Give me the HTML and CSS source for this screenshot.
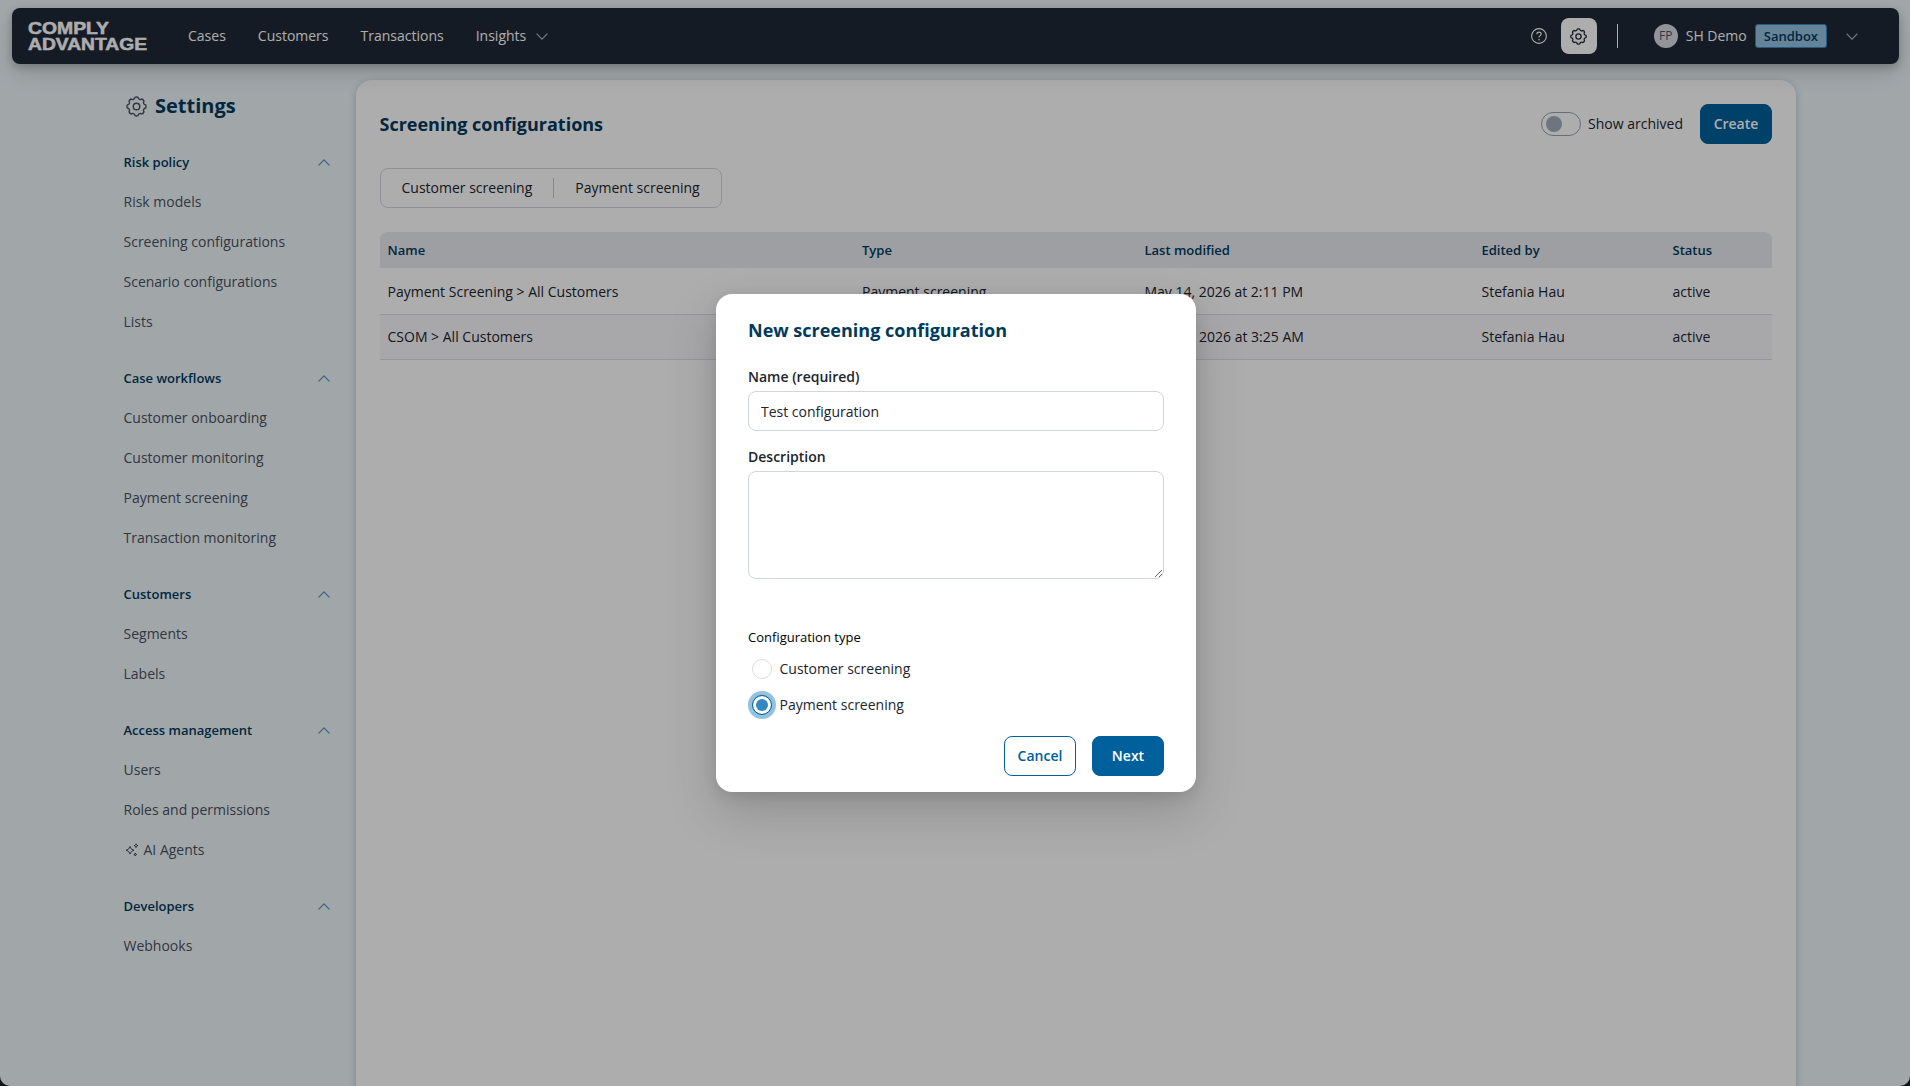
FILE: index.html
```html
<!DOCTYPE html>
<html lang="en">
<head>
	<meta charset="UTF-8" />
	<meta name="viewport" content="width=device-width, initial-scale=1.0" />
	<title>Screening configurations</title>
	<link rel="stylesheet" href="styles.css">
</head>
<body>
	<!-- shared icons -->
	<svg class="defs" width="0" height="0">
		<symbol id="gear" viewBox="0 0 24 24">
			<path d="M10.3 1.5A4 4 0 0 1 13.7 1.5A2.7 2.7 0 0 0 18.1 3.4A4 4 0 0 1 20.6 5.9A2.7 2.7 0 0 0 22.5 10.3A4 4 0 0 1 22.5 13.7A2.7 2.7 0 0 0 20.6 18.1A4 4 0 0 1 18.1 20.6A2.7 2.7 0 0 0 13.7 22.5A4 4 0 0 1 10.3 22.5A2.7 2.7 0 0 0 5.9 20.6A4 4 0 0 1 3.4 18.1A2.7 2.7 0 0 0 1.5 13.7A4 4 0 0 1 1.5 10.3A2.7 2.7 0 0 0 3.4 5.9A4 4 0 0 1 5.9 3.4A2.7 2.7 0 0 0 10.3 1.5z"/>
			<circle cx="12" cy="12" r="3.7"/>
		</symbol>
		<symbol id="up" viewBox="0 0 12 7"><path d="M.6 6.3 6 .9l5.4 5.4"/></symbol>
		<symbol id="down" viewBox="0 0 12 7"><path d="M.6.7 6 6.1 11.4.7"/></symbol>
	</svg>

	<div class="page">
		<header class="topbar">
			<svg class="logo" width="120" height="28" viewBox="0 0 120 28">
				<text x="0" y="11.8" textLength="81" lengthAdjust="spacingAndGlyphs">COMPLY</text>
				<text x="0" y="27.8" textLength="119" lengthAdjust="spacingAndGlyphs">ADVANTAGE</text>
			</svg>
			<nav>
				<a>Cases</a>
				<a>Customers</a>
				<a>Transactions</a>
				<a>Insights <svg class="chev"><use href="#down"/></svg></a>
			</nav>
			<div class="tools">
				<svg class="help" viewBox="0 0 16 16">
					<circle cx="8" cy="8" r="7.4"/>
					<path d="M5.8 6.3c0-1.4.9-2.2 2.2-2.2s2.2.9 2.2 2c0 1.5-2.2 1.6-2.2 3.2v.3"/>
					<circle class="dot" cx="8" cy="11.7" r=".8"/>
				</svg>
				<span class="gear-btn"><svg class="icon"><use href="#gear"/></svg></span>
				<i class="sep"></i>
				<span class="avatar">FP</span>
				<span class="user">SH Demo</span>
				<span class="badge">Sandbox</span>
				<svg class="chev"><use href="#down"/></svg>
			</div>
		</header>

		<div class="layout">
			<aside class="sidebar">
				<h1><svg class="icon"><use href="#gear"/></svg>Settings</h1>
				<section>
					<h2>Risk policy <svg class="chev"><use href="#up"/></svg></h2>
					<a>Risk models</a>
					<a>Screening configurations</a>
					<a>Scenario configurations</a>
					<a>Lists</a>
				</section>
				<section>
					<h2>Case workflows <svg class="chev"><use href="#up"/></svg></h2>
					<a>Customer onboarding</a>
					<a>Customer monitoring</a>
					<a>Payment screening</a>
					<a>Transaction monitoring</a>
				</section>
				<section>
					<h2>Customers <svg class="chev"><use href="#up"/></svg></h2>
					<a>Segments</a>
					<a>Labels</a>
				</section>
				<section>
					<h2>Access management <svg class="chev"><use href="#up"/></svg></h2>
					<a>Users</a>
					<a>Roles and permissions</a>
					<a><svg class="sparkle" viewBox="0 0 14 14">
						<path d="M5 3.4 6.3 6 9 7.2 6.3 8.5 5 11.1 3.7 8.5 1 7.2 3.7 6z"/>
						<path d="M11 .8l.6 1.3 1.3.6-1.3.6-.6 1.3-.6-1.3-1.3-.6 1.3-.6zM10.3 10l.4 1.1 1.1.4-1.1.4-.4 1.1-.4-1.1-1.1-.4 1.1-.4z"/>
					</svg>AI Agents</a>
				</section>
				<section>
					<h2>Developers <svg class="chev"><use href="#up"/></svg></h2>
					<a>Webhooks</a>
				</section>
			</aside>

			<main class="card">
				<div class="card-head">
					<h2>Screening configurations</h2>
					<span class="toggle"></span>
					<span class="toggle-label">Show archived</span>
					<button class="btn">Create</button>
				</div>
				<div class="tabs">
					<span>Customer screening</span>
					<span>Payment screening</span>
				</div>
				<table>
					<thead>
						<tr>
							<th class="c-name">Name</th>
							<th class="c-type">Type</th>
							<th class="c-date">Last modified</th>
							<th class="c-user">Edited by</th>
							<th>Status</th>
						</tr>
					</thead>
					<tbody>
						<tr>
							<td>Payment Screening &gt; All Customers</td>
							<td>Payment screening</td>
							<td>May 14, 2026 at 2:11 PM</td>
							<td>Stefania Hau</td>
							<td>active</td>
						</tr>
						<tr>
							<td>CSOM &gt; All Customers</td>
							<td></td>
							<td><span class="later">2026 at 3:25 AM</span></td>
							<td>Stefania Hau</td>
							<td>active</td>
						</tr>
					</tbody>
				</table>
			</main>
		</div>
	</div>

	<div class="overlay">
		<form class="modal">
			<h2>New screening configuration</h2>
			<label for="name">Name (required)</label>
			<input type="text" id="name" value="Test configuration">
			<label for="desc">Description</label>
			<textarea id="desc"></textarea>
			<p>Configuration type</p>
			<div class="radio"><i></i>Customer screening</div>
			<div class="radio on"><i></i>Payment screening</div>
			<div class="actions">
				<button type="button" class="btn ghost">Cancel</button>
				<button type="button" class="btn">Next</button>
			</div>
		</form>
	</div>
</body>
</html>
```
FILE: styles.css
```css
*{margin: 0;padding: 0;box-sizing: border-box;}
body{
	width: 1910px;height: 1086px;overflow: hidden;
	background: #16211d;color: #20242d;
	font: 14px/20px "Open Sans", sans-serif;
}
h1,h2{color: #003a5d;}
svg{fill: none;stroke: currentColor;flex: none;}
.defs{position: absolute;}
.chev{width: 12px;height: 7px;stroke-width: 1.2;}

.page{
	height: 1086px;padding: 8px 11px 0 12px;overflow: hidden;
	background: #edf6fa;border-radius: 0 0 10px 10px;
}

/* top bar */
.topbar{
	height: 56px;padding: 0 41px 0 16px;border-radius: 8px;
	display: flex;align-items: center;
	background: #1f2937;color: #fff;
	position: relative;
	box-shadow: 0 10px 24px rgba(0,0,0,.12), 0 3px 8px rgba(0,0,0,.22);
}
.logo{
	fill: #fff;stroke: #fff;stroke-width: .5;overflow: visible;
	font: bold 16.6px "Liberation Sans", sans-serif;
}
nav{display: flex;gap: 32px;margin-left: 40px;}
nav .chev{margin-left: 6px;color: #aeb4c0;position: relative;top: -1px;}
.tools{display: flex;align-items: center;margin-left: auto;}
.help{width: 16px;height: 16px;stroke-width: 1.1;}
.help .dot{fill: #fff;stroke: none;}
.gear-btn{
	width: 36px;height: 36px;margin-left: 14px;border-radius: 8px;
	display: flex;align-items: center;justify-content: center;
	background: #fff;color: #1f2937;
}
.gear-btn .icon{width: 17px;height: 17px;stroke-width: 1.8;}
.sep{width: 1px;height: 24px;margin: 0 36px 0 20px;background: #fff;}
.avatar{
	width: 24px;height: 24px;border-radius: 50%;
	background: #d9dae5;color: #4b5563;
	font-size: 12px;line-height: 24px;text-align: center;
}
.user{margin-left: 8px;}
.badge{
	height: 24px;margin: 0 19px 0 8px;padding: 0 8px;
	border: 1px solid #3388c4;border-radius: 3px;
	background: #95c3e0;color: #003a5d;
	font-size: 13px;line-height: 23px;font-weight: 600;
}
.tools > .chev{color: #aeb4c0;}

.layout{display: flex;padding: 16px 103px 0 111px;height: 1022px;}

/* sidebar */
.sidebar{width: 233px;padding-right: 26px;color: #4b5060;}
.sidebar h1{
	height: 52px;padding-left: 2.5px;
	display: flex;align-items: center;
	font-size: 20px;
}
.sidebar h1 .icon{width: 21px;height: 21px;margin-right: 8.5px;color: #4b5060;stroke-width: 1.6;}
.sidebar section{margin-bottom: 16px;padding-left: .5px;}
.sidebar section:nth-of-type(1){margin-top: 10px;}
.sidebar h2{
	height: 40px;
	display: flex;align-items: center;justify-content: space-between;
	font-size: 13px;font-weight: 600;
}
.sidebar h2 .chev{color: #5793be;}
.sidebar a{display: flex;align-items: center;height: 40px;}
.sparkle{width: 14px;height: 14px;margin: 0 5px 0 1px;}

/* main card */
.card{
	flex: 1;height: 1040px;padding: 24px 24px 24px 23.5px;
	background: #fff;border-radius: 16px;
	box-shadow: 0 2px 8px rgba(0,0,0,.2);
}
.card-head{display: flex;align-items: center;height: 40px;}
.card-head h2{font-size: 18px;margin-right: auto;}
.toggle{
	width: 40px;height: 24px;padding: 3px 4px;
	border: 1px solid #9aa3b2;border-radius: 12px;
}
.toggle:before{
	content: "";display: block;
	width: 16px;height: 16px;border-radius: 50%;background: #a3adba;
}
.toggle-label{margin: 0 17px 0 7px;}
.btn{
	width: 72px;height: 40px;padding-bottom: 2px;
	border: 1px solid #00609c;border-radius: 8px;
	background: #00609c;color: #fff;
	font: 600 14px "Open Sans", sans-serif;
}
.btn.ghost{background: #fff;color: #00609c;}
.tabs{
	display: inline-flex;align-items: center;
	height: 40px;margin: 24px 0;
	border: 1px solid #d3d6e0;border-radius: 8px;
}
.tabs span{padding: 0 21px;}
.tabs span + span{border-left: 1px solid #c4c7d0;}
table{width: 1392px;table-layout: fixed;border-collapse: separate;border-spacing: 0;}
th,td{padding: 0 8px;text-align: left;white-space: nowrap;}
th{
	height: 36px;background: #e9eaf0;color: #003a5d;
	font-size: 13px;font-weight: 600;
}
th:first-child{border-radius: 8px 0 0 0;}
th:last-child{border-radius: 0 8px 0 0;}
td{height: 45px;border-bottom: 1px solid #dcdee6;}
tbody tr:first-child td{height: 47px;padding-top: 2px;}
tbody tr:nth-child(2) td{background: #f8f8fb;}
.c-name{width: 474.5px;}
.c-type{width: 282.5px;}
.c-date{width: 337px;}
.c-user{width: 191px;}
.later{margin-left: 54.5px;}

/* modal */
.overlay{
	position: absolute;top: 0;left: 0;
	width: 1910px;height: 1086px;padding-left: 2px;
	display: flex;align-items: center;justify-content: center;
	background: rgba(0,0,0,.32);
}
.modal{
	width: 480px;height: 498px;padding: 24px 32px 0;
	border-radius: 16px;background: #fff;
	box-shadow: 0 20px 50px rgba(0,0,0,.17), 0 4px 14px rgba(0,0,0,.1);
}
.modal h2{font-size: 18px;line-height: 24px;margin-bottom: 25px;}
.modal label{display: block;height: 24px;line-height: 20px;font-weight: 600;}
.modal input,.modal textarea{
	display: block;width: 416px;
	border: 1px solid #d0d5df;border-radius: 8px;outline: none;
	font: 14px "Open Sans", sans-serif;color: #20242d;
}
.modal input{height: 40px;padding: 0 12px;margin-bottom: 16px;}
.modal textarea{height: 108px;resize: vertical;}
.modal p{margin-top: 48px;font-size: 13px;color: #000;}
.radio{display: flex;align-items: center;height: 20px;margin: 12px 0 16px 4px;}
.radio i{
	width: 20px;height: 20px;margin-right: 7.5px;
	border: 1px solid #d9dce5;border-radius: 50%;
}
.radio.on{margin: 16px 0 0 4px;}
.radio.on i{
	padding: 3px;border-color: #00609c;
	background: #3388c4 content-box;
	box-shadow: 0 0 0 4px #93c1e0;
}
.actions{display: flex;justify-content: flex-end;gap: 16px;margin-top: 21px;}
```
